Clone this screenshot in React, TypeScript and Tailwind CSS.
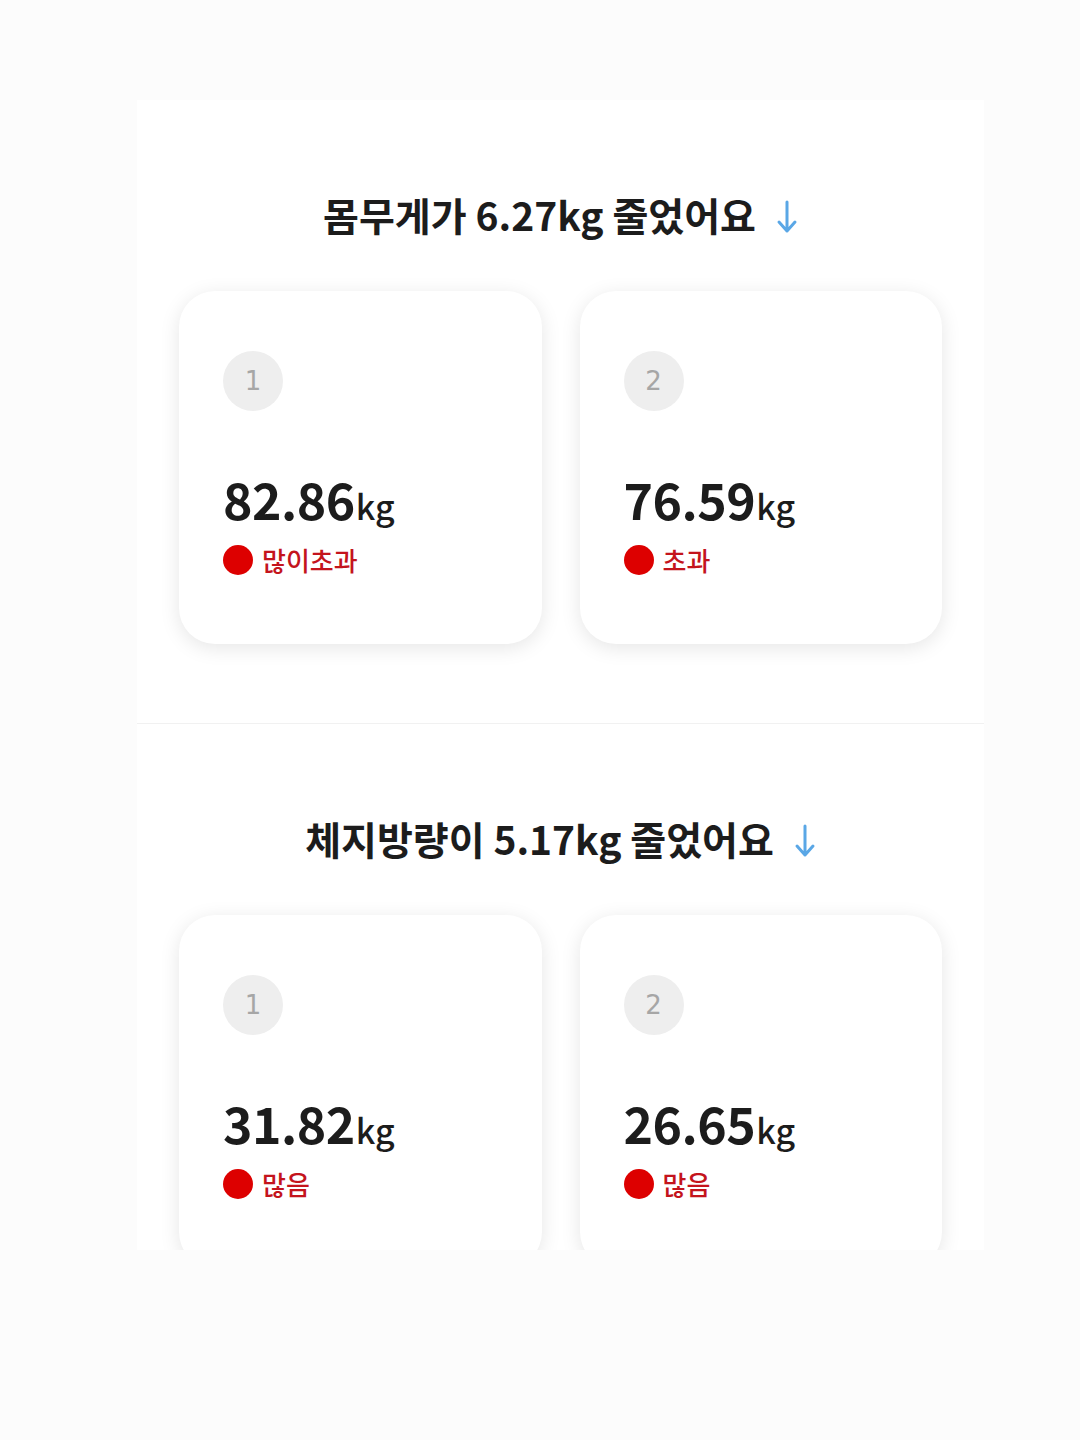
// 체성분 변화 요약 — 몸무게 / 체지방량 비교 카드

const font = { fontFamily: '"Noto Sans CJK KR", "Noto Sans", sans-serif' };

function DownArrow() {
  return (
    <svg width="22" height="36" viewBox="0 0 22 36" fill="none" className="ml-[20px] mt-[6px]">
      <path d="M11 3 V32 M3 23 L11 32 L19 23" stroke="#5aa7e6" strokeWidth="3" strokeLinecap="round" strokeLinejoin="round" />
    </svg>
  );
}

type Item = { no: number; value: string; status: string };

function ResultCard({ no, value, status }: Item) {
  return (
    <div className="h-[353px] rounded-[36px] bg-white pl-[44px] pt-[60px] shadow-[0_4px_20px_rgba(0,0,0,0.1)]">
      <div
        className="flex size-[60px] items-center justify-center rounded-full bg-[#eeeeee] text-[26px] text-[#a6a6a6]"
        style={{ fontFamily: '"DejaVu Sans", sans-serif' }}
      >
        {no}
      </div>
      <div className="mt-[62px] flex items-baseline text-[#1c1c1c]">
        <span className="text-[50px] leading-none font-bold tracking-[-0.5px]">{value}</span>
        <span className="ml-[1px] text-[34px] leading-none font-medium">kg</span>
      </div>
      <div className="mt-[22px] flex items-center gap-[9px]">
        <span className="size-[30px] rounded-full bg-[#dd0000]" />
        <span className="text-[26px] leading-none font-medium text-[#c4141c]">{status}</span>
      </div>
    </div>
  );
}

function Section({ title, items }: { title: string; items: Item[] }) {
  return (
    <section className="pt-[90px]">
      <div className="flex items-center justify-center">
        <h2 className="text-[39px] leading-[48px] font-bold text-[#1c1c1c]">{title}</h2>
        <DownArrow />
      </div>
      <div className="mt-[53px] grid grid-cols-2 gap-[38px] px-[42px]">
        {items.map((it) => (
          <ResultCard key={it.no} {...it} />
        ))}
      </div>
    </section>
  );
}

export default function App() {
  return (
    <div className="min-h-[1440px] bg-[#fcfcfc] pt-[100px]" style={font}>
      <div className="ml-[137px] h-[1150px] w-[847px] overflow-hidden bg-white">
        <Section
          title="몸무게가 6.27kg 줄었어요"
          items={[
            { no: 1, value: "82.86", status: "많이초과" },
            { no: 2, value: "76.59", status: "초과" },
          ]}
        />
        <div className="mt-[79px] h-px bg-[#f1f1f1]" />
        <Section
          title="체지방량이 5.17kg 줄었어요"
          items={[
            { no: 1, value: "31.82", status: "많음" },
            { no: 2, value: "26.65", status: "많음" },
          ]}
        />
      </div>
    </div>
  );
}
